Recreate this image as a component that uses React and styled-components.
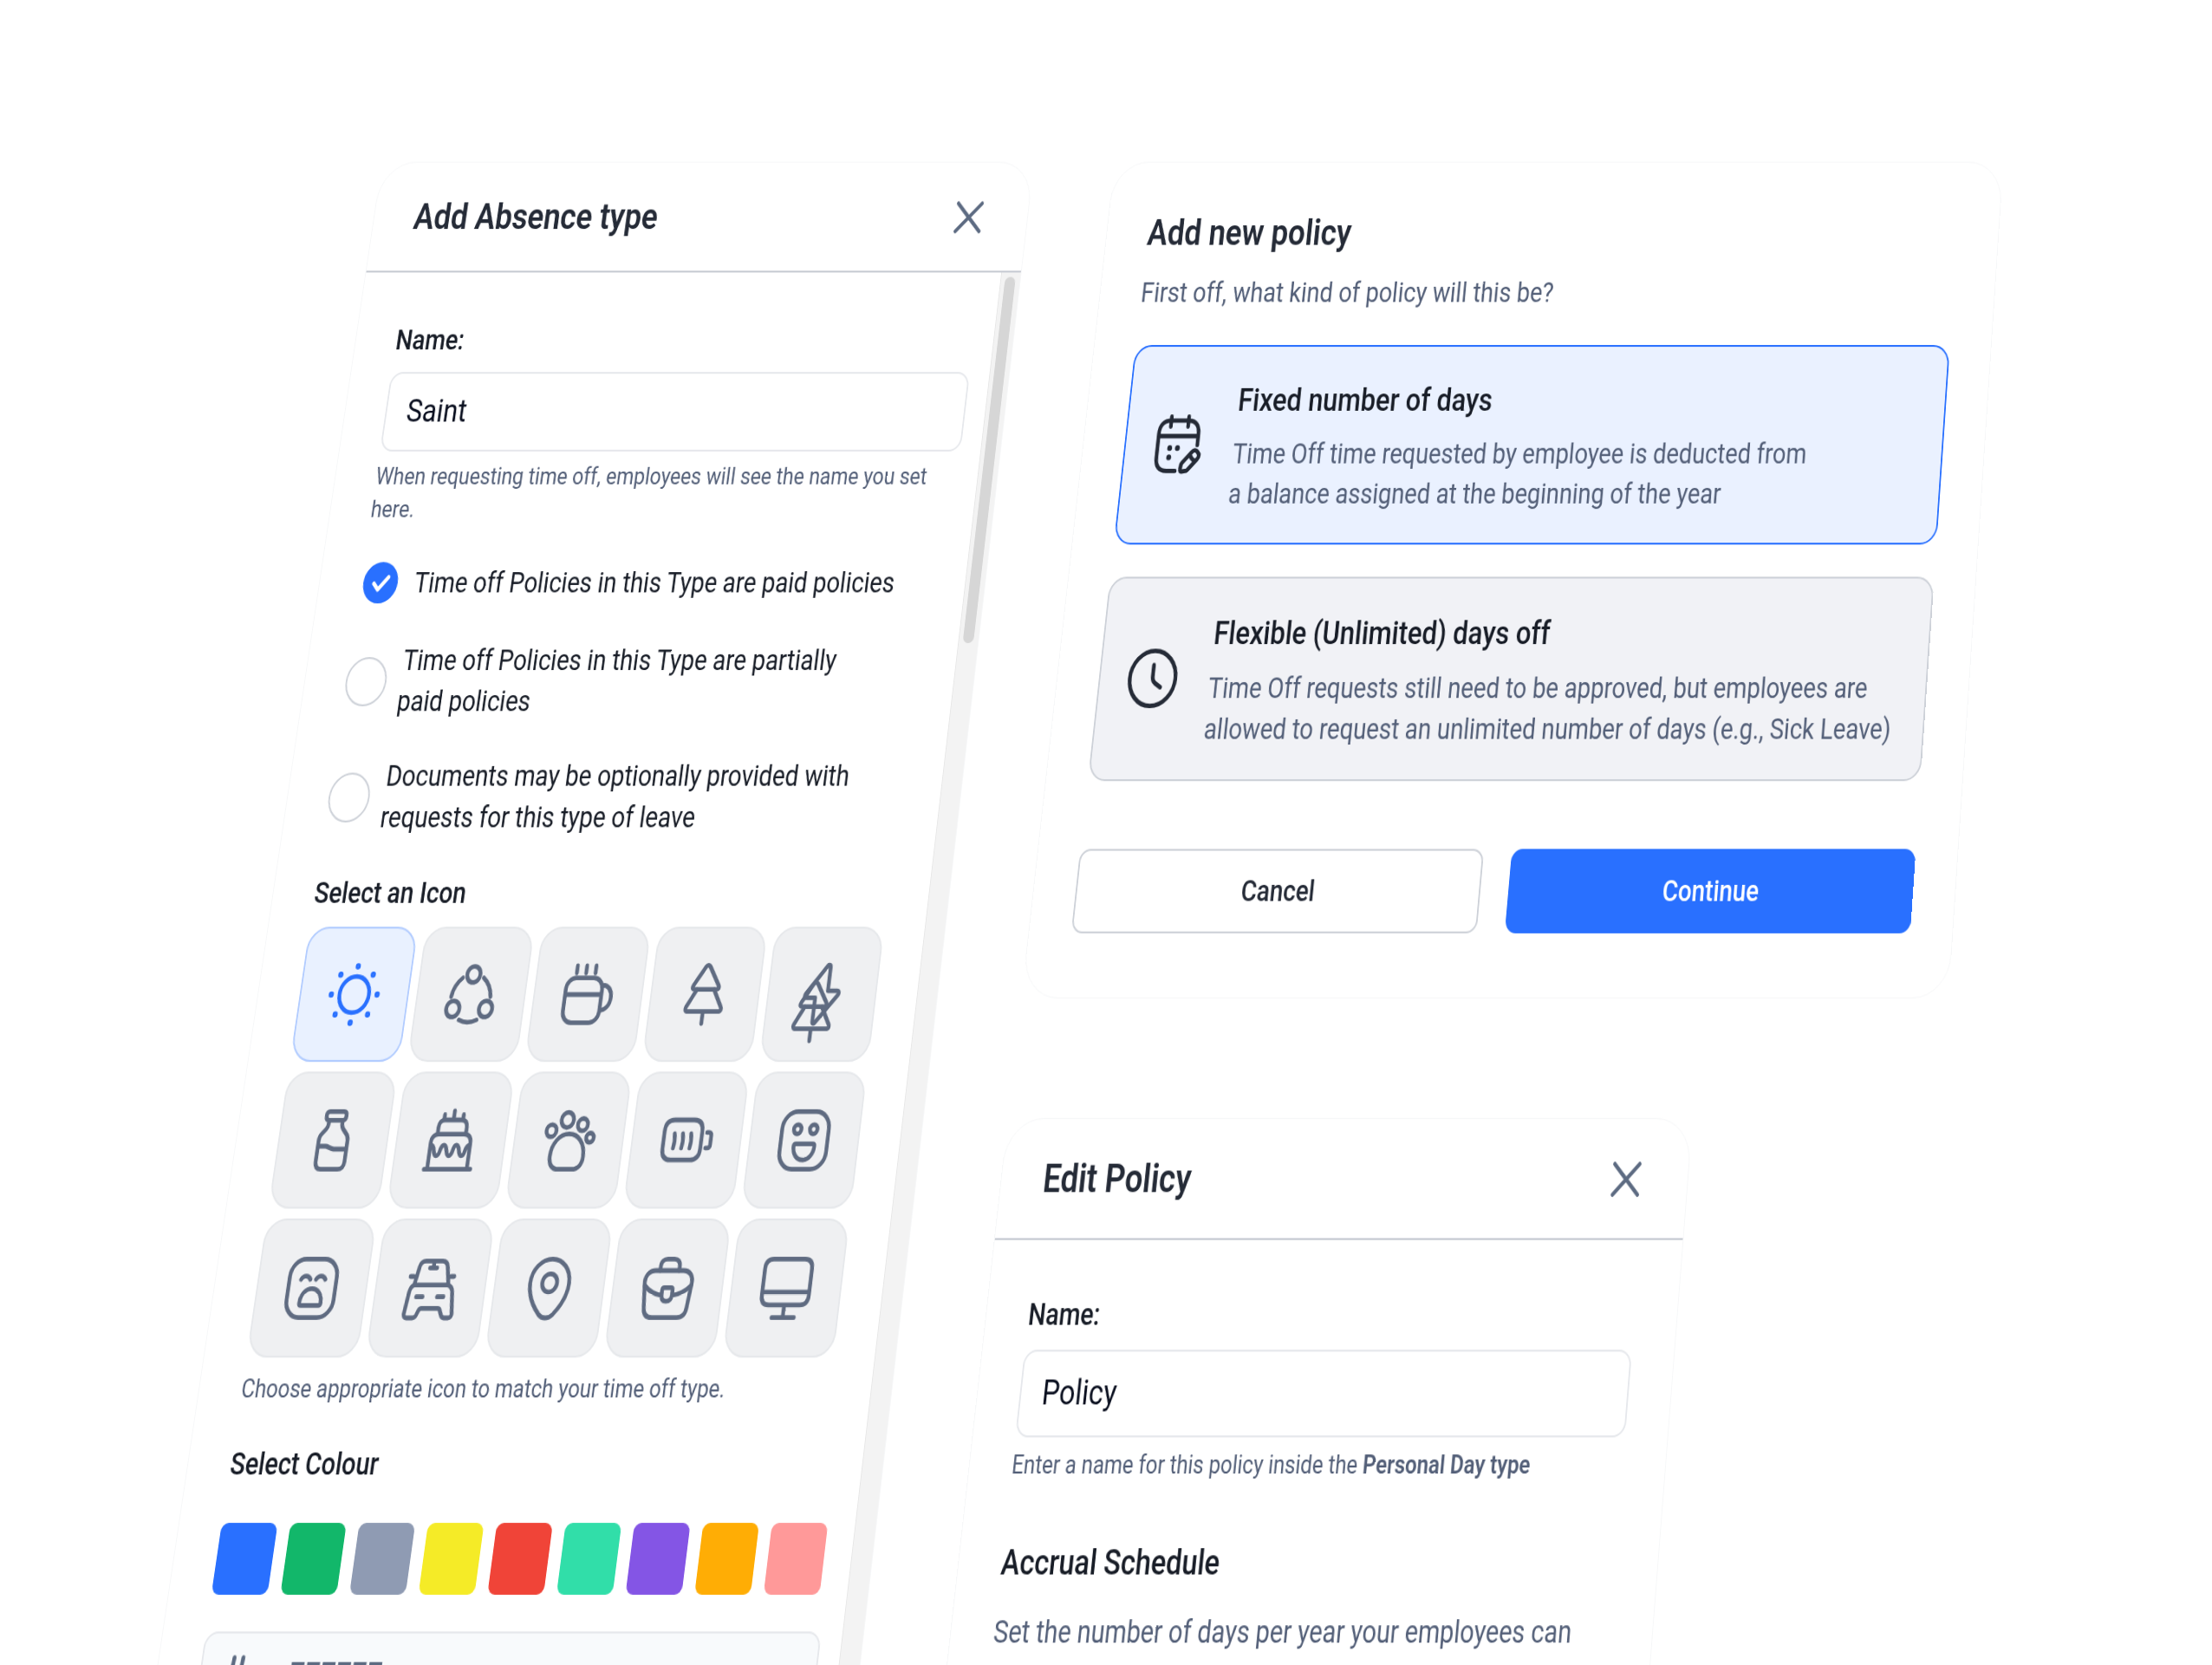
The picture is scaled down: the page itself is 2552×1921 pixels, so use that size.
import React, { useState } from 'react';
import styled, { createGlobalStyle } from 'styled-components';

const ICONS = [
  { name: 'Sun', draw: <SunIcon /> },
  {
    name: 'Team',
    draw: (
      <>
        <circle cx="12" cy="5" r="2.8" />
        <circle cx="5" cy="17" r="2.8" />
        <circle cx="19" cy="17" r="2.8" />
        <path d="M7.5 6.2a9.6 9.6 0 0 0-3.9 6.6M16.5 6.2a9.6 9.6 0 0 1 3.9 6.6M8.2 20.8a9.6 9.6 0 0 0 7.6 0" />
      </>
    ),
  },
  {
    name: 'Coffee',
    draw: (
      <path d="M6.2 6.2h7.5a4 4 0 0 1 4 4v7.6a4 4 0 0 1-4 4H6.2a4 4 0 0 1-4-4v-7.6a4 4 0 0 1 4-4zM2.2 12h15.5M6 2v2.5M10 2v2.5M14 2v2.5M17.7 8.7c2.6 0 4.2 1.8 4.2 4.3 0 2.6-1.7 4.5-4.2 4.5" />
    ),
  },
  { name: 'Tree', draw: <TreePath /> },
  {
    name: 'Power',
    draw: (
      <>
        <path d="M13.1 2.1 5.2 11.6c-.6.8-.4 1.5.6 1.5h3.5v8.2c0 .8.6 1 1.1.4l8.4-9.5c.6-.8.4-1.5-.6-1.5h-3.8V2.4c0-.7-.7-.9-1.3-.3z" />
        <g transform="translate(-3 6)">
          <TreePath />
        </g>
      </>
    ),
  },
  {
    name: 'Bottle',
    draw: (
      <path d="M9 2.1h6c.8 0 1.2.5 1.2 1.5s-.4 1.5-1.2 1.5H9c-.8 0-1.2-.5-1.2-1.5S8.2 2.1 9 2.1zM9.1 5.1v1.5c0 .6-.3 1-.7 1.5L6.8 9.8c-.6.6-.9 1.3-.9 2.2v7.4c0 1.6.9 2.5 2.5 2.5h7.2c1.6 0 2.5-.9 2.5-2.5V12c0-.9-.3-1.6-.9-2.2l-1.6-1.7c-.4-.5-.7-.9-.7-1.5V5.1M5.9 14h3.2c1.1 0 2 .9 3.6 1h5.3" />
    ),
  },
  {
    name: 'Cake',
    draw: (
      <path d="M2.2 21.9h19.7M3.6 21.9v-9c0-1.9 1.1-3 3-3h10.8c1.9 0 3 1.1 3 3v9M6 9.9V7.5C6 5.9 6.9 5 8.5 5h7c1.6 0 2.5.9 2.5 2.5v2.4M8 5V3.1M12 5V1.9M16 5V3.1M3.7 13.6c2.4 0 1 3.7 2.9 3.7s.9-3.7 2.7-3.7c1.9 0 .9 3.7 2.7 3.7s.9-3.7 2.6-3.7c1.9 0 .9 3.7 2.7 3.7s.6-3.7 3-3.7" />
    ),
  },
  {
    name: 'Pets',
    draw: (
      <>
        <circle cx="4.2" cy="8.7" r="2.1" />
        <circle cx="10.5" cy="5" r="2.6" />
        <circle cx="17.2" cy="6.6" r="2.1" />
        <circle cx="20.9" cy="11.1" r="1.6" />
        <path d="M11.9 9.8c-4 0-7 3.3-7 7.7 0 2.8 1.5 4.4 4.2 4.4h5.7c2.7 0 4.2-1.6 4.2-4.4 0-4.4-3-7.7-7.1-7.7z" />
      </>
    ),
  },
  {
    name: 'Mug',
    draw: (
      <path d="M6.2 5h8.2c2.6 0 3.9 1.3 3.9 3.9v5.9c0 2.6-1.3 3.9-3.9 3.9H6.2c-2.6 0-3.9-1.3-3.9-3.9V8.9C2.3 6.3 3.6 5 6.2 5zM6.7 9.7c.4 1.6.4 3.3 0 4.9M10.2 9.7c.4 1.6.4 3.3 0 4.9M13.7 9.7c.4 1.6.4 3.3 0 4.9M20.4 9.3h.9c.6 0 1 .4 1 1v3.3c0 .6-.4 1-1 1h-.9" />
    ),
  },
  {
    name: 'Happy',
    draw: (
      <>
        <rect x="2.1" y="2.1" width="19.8" height="19.8" rx="6" />
        <circle cx="8.7" cy="8.2" r="1.6" />
        <circle cx="15.5" cy="8.2" r="1.6" />
        <path d="M8.6 13.2h7.2c.5 0 .8.3.8.8 0 2.7-1.9 4.7-4.4 4.7s-4.4-2-4.4-4.7c0-.5.3-.8.8-.8z" />
      </>
    ),
  },
  {
    name: 'Sad',
    draw: (
      <>
        <rect x="2.1" y="2.1" width="19.8" height="19.8" rx="6" />
        <path d="M7 9c.9-1.5 3-1.5 3.9 0M13.3 9c.9-1.5 3-1.5 3.9 0M8.4 17.8h7.4c.5 0 .8-.3.8-.8 0-2.8-1.9-4.9-4.5-4.9s-4.5 2.1-4.5 4.9c0 .5.3.8.8.8z" />
      </>
    ),
  },
  {
    name: 'Car',
    draw: (
      <path d="M5 10.9 6.3 4.7c.3-1.3 1.1-1.9 2.4-1.9h7c1.3 0 2.1.6 2.4 1.9l1.3 6.2M5 10.9h14.4M5 10.9c-1 .4-1.5 1.2-1.7 2.3l-1 7.3c-.1.9.4 1.5 1.3 1.5h2.5c.7 0 1.1-.3 1.4-.9l.8-1.7c.2-.4.5-.6 1-.6h6.9c.5 0 .8.2 1 .6l.8 1.7c.3.6.7.9 1.4.9h1.7c.9 0 1.4-.6 1.3-1.5l-1-7.3c-.2-1.1-.9-1.9-2-2.3M3 8h1.3M20.1 8h1.3M10.7 5.1h3M12.2 2.9v2.2M6.5 14.9h2.7M15.3 14.9H18" />
    ),
  },
  {
    name: 'Location',
    draw: (
      <>
        <circle cx="12" cy="10.2" r="3.1" />
        <path d="M12 2.1c-4.6 0-8.2 3.6-8.2 8.2 0 4.1 2.3 7.6 5.2 10.5 1.7 1.6 4.3 1.6 6 0 2.9-2.9 5.2-6.4 5.2-10.5 0-4.6-3.6-8.2-8.2-8.2z" />
      </>
    ),
  },
  {
    name: 'Work',
    draw: (
      <>
        <path d="M6.2 6h11.6c2.7 0 4.4 1.8 4.1 4.4l-.9 8.2c-.2 2.2-1.500 3.300-3.700 3.300H6.700c-2.200 0-3.500-1.100-3.700-3.300l-.9-8.200C1.800 7.800 3.500 6 6.200 6z" />
        <path d="M8 6V4.700c0-1.700 1-2.600 2.600-2.600h2.800c1.600 0 2.600.9 2.600 2.600V6M2.200 11c2 1.900 4.600 3 7.600 3.400M21.800 11c-2 1.900-4.600 3-7.600 3.400M10.600 11.800h2.800c.5 0 .8.3.8.8v1.600c0 1.400-.7 2.200-2.200 2.200s-2.200-.8-2.200-2.200v-1.600c0-.5.3-.8.8-.8z" />
      </>
    ),
  },
  {
    name: 'Desktop',
    draw: (
      <path d="M5.4 2.1h13.2c2.2 0 3.3 1.1 3.3 3.3v8.9c0 2.2-1.1 3.3-3.3 3.3H5.4c-2.2 0-3.3-1.1-3.3-3.3V5.4c0-2.2 1.1-3.3 3.3-3.3zM2.1 13.3h19.8M12 17.6v4.3M7.3 21.9h9.4" />
    ),
  },
];

const COLOURS = [
  '#2970ff',
  '#12b76a',
  '#8f9bb3',
  '#f5eb27',
  '#f04438',
  '#31dea9',
  '#8455e5',
  '#ffad05',
  '#ff9999',
];

function SunIcon() {
  const dots = [0, 45, 90, 135, 180, 225, 270, 315];
  return (
    <>
      <circle cx="12" cy="12" r="6.3" />
      {dots.map(angle => (
        <circle
          key={angle}
          cx={12 + 9.8 * Math.cos((angle * Math.PI) / 180)}
          cy={12 + 9.8 * Math.sin((angle * Math.PI) / 180)}
          r="0.5"
          strokeWidth="1.2"
        />
      ))}
    </>
  );
}

function TreePath() {
  return (
    <path d="M11.1 2.3 6.6 8.9c-.5.8-.2 1.3.6 1.3h9.6c.8 0 1.1-.5.6-1.3l-4.5-6.6c-.5-.7-1.3-.7-1.8 0zM8.4 10.2 4.7 16.2c-.6 1-.2 1.7.9 1.7h12.8c1.1 0 1.5-.7.9-1.7l-3.7-6M12 17.9v4.2" />
  );
}

function Icon({ children, size = 72, width = 1.6 }) {
  return (
    <IconSvg
      viewBox="0 0 24 24"
      $size={size}
      strokeWidth={width}
      aria-hidden="true"
    >
      {children}
    </IconSvg>
  );
}

function PanelHeader({ title }) {
  return (
    <Header>
      <Title>{title}</Title>
      <CloseBtn type="button" aria-label="Close">
        <Icon size={40} width={2.6}>
          <path d="M2.5 2.5l19 19M21.5 2.5l-19 19" />
        </Icon>
      </CloseBtn>
    </Header>
  );
}

function Check({ id, label, checked, onChange }) {
  return (
    <CheckRow htmlFor={id}>
      <CheckSlot>
        <CheckInput
          id={id}
          type="checkbox"
          checked={checked}
          onChange={onChange}
        />
        {checked && (
          <CheckMark viewBox="0 0 24 24" aria-hidden="true">
            <path d="M3 12.5l6 6.5L21 5.5" />
          </CheckMark>
        )}
      </CheckSlot>
      <span>{label}</span>
    </CheckRow>
  );
}

function AbsencePanel() {
  const [name, setName] = useState('Saint');
  const [hex, setHex] = useState('FFFFFF');
  const [icon, setIcon] = useState('Sun');
  const [checks, setChecks] = useState([true, false, false]);
  const toggle = index =>
    setChecks(checks.map((value, i) => (i === index ? !value : value)));

  return (
    <AbsenceCard>
      <PanelHeader title="Add Absence type" />
      <ScrollArea>
        <Body>
          <div>
            <Label htmlFor="absence-name">Name:</Label>
            <TextInput
              id="absence-name"
              type="text"
              value={name}
              onChange={event => setName(event.target.value)}
            />
            <Help>
              When requesting time off, employees will see the name you set
              here.
            </Help>
          </div>
          <Check
            id="paid"
            label="Time off Policies in this Type are paid policies"
            checked={checks[0]}
            onChange={() => toggle(0)}
          />
          <Check
            id="partially-paid"
            label={
              <>
                Time off Policies in this Type are partially
                <br />
                paid policies
              </>
            }
            checked={checks[1]}
            onChange={() => toggle(1)}
          />
          <Check
            id="documents"
            label="Documents may be optionally provided with requests for this type of leave"
            checked={checks[2]}
            onChange={() => toggle(2)}
          />
          <div>
            <GroupTitle>Select an Icon</GroupTitle>
            <IconGrid>
              {ICONS.map(item => (
                <IconTile
                  key={item.name}
                  type="button"
                  aria-label={item.name}
                  aria-pressed={item.name === icon}
                  $selected={item.name === icon}
                  onClick={() => setIcon(item.name)}
                >
                  <Icon>{item.draw}</Icon>
                </IconTile>
              ))}
            </IconGrid>
            <Help>Choose appropriate icon to match your time off type.</Help>
          </div>
          <ColourGroup>
            <GroupTitle>Select Colour</GroupTitle>
            <Swatches>
              {COLOURS.map(colour => (
                <Swatch
                  key={colour}
                  type="button"
                  aria-label={colour}
                  $colour={colour}
                />
              ))}
            </Swatches>
            <HexField>
              <Icon size={44} width={2.6}>
                <path d="M9 2 7 22M15 2l-2 20M3 9h17M2 15h17" />
              </Icon>
              <HexInput
                type="text"
                aria-label="Hex colour"
                value={hex}
                onChange={event => setHex(event.target.value)}
              />
            </HexField>
          </ColourGroup>
        </Body>
        <ScrollTrack>
          <ScrollThumb />
        </ScrollTrack>
      </ScrollArea>
    </AbsenceCard>
  );
}

function NewPolicyPanel() {
  const [kind, setKind] = useState('fixed');
  return (
    <PolicyCard>
      <Title>Add new policy</Title>
      <Intro>First off, what kind of policy will this be?</Intro>
      <Options>
        <Option
          type="button"
          $selected={kind === 'fixed'}
          onClick={() => setKind('fixed')}
        >
          <Icon>
            <path d="M8.2 1.8v3.7M15.8 1.8v3.7M3.3 9h17.4M20.7 12.3V8.2c0-3.2-1.7-4.9-4.9-4.9H8.2C5 3.3 3.3 5 3.3 8.2v8.7c0 3.2 1.7 4.9 4.9 4.9H12" />
            <path
              strokeWidth="2.1"
              d="M8.7 13.4h.01M12.1 13.4h.01M8.7 16.8h.01"
            />
            <path d="M18.6 14.9l-3.8 3.9c-.2.2-.4.6-.4.9l-.2 1.500c-.1.5.3.8.8.8l1.500-.2c.3 0 .7-.2.9-.4l3.800-3.900c.8-.9 1-1.700 0-2.600-.9-1-1.800-.8-2.600 0zM17.900 15.700c.4 1.200 1.300 2.100 2.500 2.500" />
          </Icon>
          <OptionCopy>
            <OptionTitle>Fixed number of days</OptionTitle>
            <OptionText>
              Time Off time requested by employee is deducted from
              <br />a balance assigned at the beginning of the year
            </OptionText>
          </OptionCopy>
        </Option>
        <Option
          type="button"
          $selected={kind === 'flexible'}
          onClick={() => setKind('flexible')}
        >
          <Icon>
            <circle cx="12" cy="12" r="9.9" />
            <path d="M12 7.2v4.3c0 .9.5 1.700 1.200 2.200l2.500 1.500" />
          </Icon>
          <OptionCopy>
            <OptionTitle>Flexible (Unlimited) days off</OptionTitle>
            <OptionText>
              Time Off requests still need to be approved, but employees are
              <br />
              allowed to request an unlimited number of days (e.g., Sick Leave)
            </OptionText>
          </OptionCopy>
        </Option>
      </Options>
      <Actions>
        <ActionBtn type="button">Cancel</ActionBtn>
        <ActionBtn type="button" $primary>
          Continue
        </ActionBtn>
      </Actions>
    </PolicyCard>
  );
}

function EditPolicyPanel() {
  const [name, setName] = useState('Policy');
  return (
    <EditCard>
      <PanelHeader title="Edit Policy" />
      <Body>
        <div>
          <Label htmlFor="policy-name">Name:</Label>
          <TextInput
            id="policy-name"
            type="text"
            value={name}
            onChange={event => setName(event.target.value)}
          />
          <Help>
            Enter a name for this policy inside the{' '}
            <strong>Personal Day type</strong>
          </Help>
        </div>
        <Section>
          <SectionTitle>Accrual Schedule</SectionTitle>
          <SectionText>
            Set the number of days per year your employees can
          </SectionText>
        </Section>
      </Body>
    </EditCard>
  );
}

export default function App() {
  return (
    <Page>
      <GlobalStyle />
      <Scene>
        <AbsencePanel />
        <Column>
          <NewPolicyPanel />
          <EditPolicyPanel />
        </Column>
      </Scene>
    </Page>
  );
}

const GlobalStyle = createGlobalStyle`
  * {
    box-sizing: border-box;
  }
  body {
    margin: 0;
    background: #fff;
    font-family: Roboto, sans-serif;
  }
  h2, h3, p {
    margin: 0;
  }
  button, input {
    font-family: inherit;
  }
`;

const Page = styled.main`
  height: 100vh;
  overflow: hidden;
`;

/* all the panels lie on one tilted plane */
const Scene = styled.div`
  display: flex;
  gap: 107px;
  width: 118vw;
  padding: 185px 0 0 548px;
  transform-origin: 0 0;
  transform: matrix3d(
    0.855, 0, 0, 0,
    -0.1705, 1, 0, -0.0000451,
    0, 0, 1, 0,
    0, 0, 0, 1
  );
`;

const Column = styled.div`
  display: flex;
  flex-direction: column;
  align-items: flex-start;
  gap: 124px;
`;

const Card = styled.section`
  border: 1px solid #f6f7f8;
  border-radius: 46px;
  background: #fff;
`;

const AbsenceCard = styled(Card)`
  display: flex;
  flex: none;
  flex-direction: column;
  width: 873px;
`;

const PolicyCard = styled(Card)`
  width: 1190px;
  padding: 54px 54px 67px;
`;

const EditCard = styled(Card)`
  width: 874px;
  padding-bottom: 200px;
`;

const Header = styled.header`
  display: flex;
  justify-content: space-between;
  align-items: center;
  height: 124px;
  padding: 2px 58px 0 53px;
  border-bottom: 2px solid #c6cad2;
`;

const Title = styled.h2`
  color: #252b37;
  font-size: 40px;
  font-weight: 600;
  line-height: 52px;
`;

const CloseBtn = styled.button`
  display: flex;
  padding: 0;
  border: 0;
  background: none;
  color: #5d6b82;
  cursor: pointer;
`;

const IconSvg = styled.svg`
  flex: none;
  width: ${({ $size }) => $size}px;
  height: ${({ $size }) => $size}px;
  overflow: visible;
  fill: none;
  stroke: currentColor;
  stroke-linecap: round;
  stroke-linejoin: round;
`;

const ScrollArea = styled.div`
  display: flex;
  flex: 1;
`;

const ScrollTrack = styled.div`
  width: 26px;
  margin-left: -27px;
  padding: 5px 6px 0 5px;
  border-left: 1px solid #e7e7e7;
  background: #f3f3f3;
`;

const ScrollThumb = styled.div`
  height: 403px;
  border-radius: 7px;
  background: #d6d6d6;
`;

const Body = styled.div`
  display: flex;
  flex: 1;
  flex-direction: column;
  gap: 36px;
  padding: 54px 53px;
`;

const Label = styled.label`
  display: block;
  margin-bottom: 13px;
  color: #181d27;
  font-size: 31px;
  font-weight: 500;
  line-height: 44px;
`;

const GroupTitle = styled.h3`
  color: #181d27;
  font-size: 31px;
  font-weight: 500;
  line-height: 44px;
`;

const TextInput = styled.input`
  display: block;
  width: 100%;
  height: 88px;
  padding: 0 26px 2px;
  border: 2px solid #e6e8ec;
  border-radius: 16px;
  outline: none;
  background: #fff;
  color: #0b1020;
  font-size: 35px;
`;

const Help = styled.p`
  margin-top: 9px;
  color: #535f78;
  font-size: 26px;
  line-height: 36px;

  strong {
    font-weight: 600;
  }
`;

const CheckRow = styled.label`
  display: flex;
  align-items: center;
  gap: 18px;
  color: #181d27;
  font-size: 31px;
  line-height: 44px;
`;

const CheckSlot = styled.span`
  display: grid;
  flex: none;
  place-items: center;
  width: 53px;
  height: 53px;
`;

const CheckInput = styled.input`
  grid-area: 1 / 1;
  width: 53px;
  height: 53px;
  margin: 0;
  border: 2px solid #cdd1d8;
  border-radius: 50%;
  appearance: none;
  background: #fff;
  cursor: pointer;

  &:checked {
    width: 45px;
    height: 45px;
    border-color: #2970ff;
    background: #2970ff;
  }
`;

const CheckMark = styled.svg`
  grid-area: 1 / 1;
  width: 24px;
  height: 24px;
  fill: none;
  stroke: #fff;
  stroke-width: 4.5;
  stroke-linecap: round;
  stroke-linejoin: round;
  pointer-events: none;
`;

const IconGrid = styled.div`
  display: grid;
  grid-template-columns: repeat(5, 140px);
  grid-auto-rows: 141px;
  gap: 10px;
  margin: 13px 0;
`;

const IconTile = styled.button`
  display: flex;
  justify-content: center;
  align-items: center;
  padding: 0;
  border: 2px solid ${({ $selected }) => ($selected ? '#b2ccff' : '#e6e8eb')};
  border-radius: 26px;
  background: ${({ $selected }) => ($selected ? '#e9f1ff' : '#eff0f2')};
  color: ${({ $selected }) => ($selected ? '#2970ff' : '#5f6b81')};
  cursor: pointer;
`;

const ColourGroup = styled.div`
  display: flex;
  flex-direction: column;
  gap: 36px;
`;

const Swatches = styled.div`
  display: flex;
  gap: 16px;
`;

const Swatch = styled.button`
  width: 70px;
  height: 71px;
  padding: 0;
  border: 0;
  border-radius: 9px;
  background: ${({ $colour }) => $colour};
  cursor: pointer;
`;

const HexField = styled.div`
  display: flex;
  align-items: center;
  gap: 42px;
  height: 88px;
  padding: 0 22px;
  border: 2px solid #e6e8ec;
  border-radius: 16px;
  background: #f8fafc;
  color: #5d6b82;
`;

const HexInput = styled.input`
  flex: 1;
  padding: 0 0 2px;
  border: 0;
  outline: none;
  background: none;
  color: #5d6b82;
  font-size: 35px;
  font-weight: 500;
`;

const Intro = styled.p`
  margin: 19px 0 36px;
  color: #535f78;
  font-size: 31px;
  line-height: 44px;
`;

const Options = styled.div`
  display: flex;
  flex-direction: column;
  gap: 35px;
`;

const Option = styled.button`
  display: flex;
  align-items: center;
  gap: 38px;
  height: 220px;
  padding: 0 32px;
  border: 2px solid ${({ $selected }) => ($selected ? '#2970ff' : '#cdd1d8')};
  border-radius: 22px;
  background: ${({ $selected }) => ($selected ? '#eaf1ff' : '#f1f2f6')};
  color: #252b37;
  text-align: left;
  cursor: pointer;
`;

const OptionCopy = styled.span`
  padding-top: 3px;
`;

const OptionTitle = styled.strong`
  display: block;
  margin-bottom: 12px;
  color: #181d27;
  font-size: 35px;
  font-weight: 500;
  line-height: 50px;
`;

const OptionText = styled.span`
  display: block;
  color: #535f78;
  font-size: 31px;
  line-height: 44px;
`;

const Actions = styled.div`
  display: flex;
  gap: 36px;
  margin-top: 72px;
`;

const ActionBtn = styled.button`
  flex: 1;
  height: 89px;
  border: 2px solid ${({ $primary }) => ($primary ? '#2970ff' : '#cdd1d8')};
  border-radius: 14px;
  background: ${({ $primary }) => ($primary ? '#2970ff' : '#fff')};
  color: ${({ $primary }) => ($primary ? '#fff' : '#252b37')};
  font-size: 31px;
  font-weight: 500;
  cursor: pointer;
`;

const Section = styled.div`
  display: flex;
  flex-direction: column;
  gap: 21px;
  margin-top: 19px;
`;

const SectionTitle = styled.h3`
  color: #181d27;
  font-size: 35px;
  font-weight: 500;
  line-height: 50px;
`;

const SectionText = styled.p`
  color: #535f78;
  font-size: 31px;
  line-height: 44px;
`;
